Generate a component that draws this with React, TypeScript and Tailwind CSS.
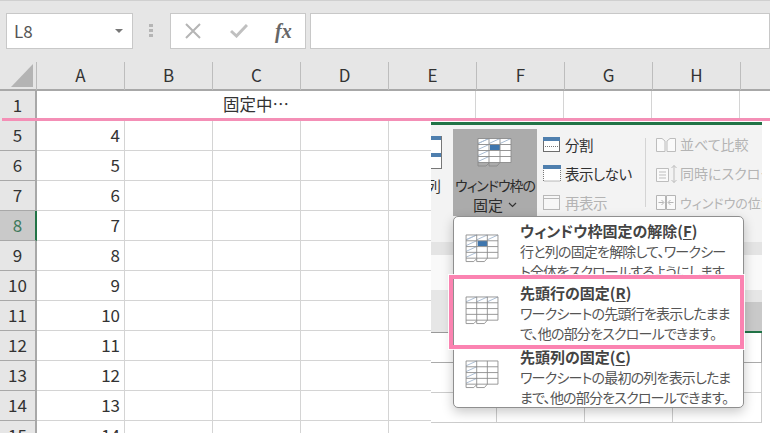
import React from "react";

const jp = '"Noto Sans CJK JP", "Noto Sans", sans-serif';
const cols = ["A", "B", "C", "D", "E", "F", "G", "H"];
const rows = [5, 6, 7, 8, 9, 10, 11, 12, 13, 14, 15];

function Freeze({ variant, w = 36, h = 30 }: { variant: "pane" | "row" | "col"; w?: number; h?: number }) {
  const hatch = "#a9bcd2";
  const line = "#8a8a8a";
  const topHatch = variant !== "col";
  const leftHatch = variant !== "row";
  return (
    <svg width={w} height={h} viewBox="0 0 36 30" fill="none">
      <rect x="1" y="1" width="33" height="24" fill="#fff" />
      {topHatch && (
        <g stroke={hatch} strokeWidth="1">
          <path d="M1 6 L12 1 M12 6 L23 1 M23 6 L34 1" />
        </g>
      )}
      {leftHatch && (
        <g stroke={hatch} strokeWidth="1">
          <path d="M1 6 L12 1 M1 12 L12 7 M1 18 L12 13 M1 24 L12 19" />
        </g>
      )}
      {variant === "pane" && <rect x="13" y="7" width="10" height="5.5" fill="#3f76ae" />}
      <path
        d="M1 1 H34 V25 M1 1 V28.5 H9 L12 25.5 V25 M12 25.5 V28.5 H20 L23 25 M1 7 H34 M1 13 H34 M1 19 H34 M1 25 H34 M12 1 V25 M23 1 V25"
        stroke={line}
        strokeWidth="0.9"
      />
    </svg>
  );
}

function SplitIcon() {
  return (
    <svg width="19" height="17" viewBox="0 0 19 17" fill="none">
      <rect x="1.5" y="1.5" width="16" height="14" fill="#fff" stroke="#6d6d6d" />
      <rect x="1" y="1" width="17" height="4" fill="#4f7fae" />
      <path d="M3 10.5 H16" stroke="#777" strokeDasharray="1 1" />
    </svg>
  );
}
function HideIcon() {
  return (
    <svg width="20" height="17" viewBox="0 0 20 17" fill="none">
      <rect x="1.5" y="2" width="17" height="14" fill="#fff" stroke="#777" strokeDasharray="1 1" />
      <rect x="1" y="0" width="18" height="4" fill="#4f7fae" />
    </svg>
  );
}
function UnhideIcon() {
  return (
    <svg width="19" height="17" viewBox="0 0 19 17" fill="none">
      <rect x="1.5" y="1.5" width="16" height="14" fill="#f7f7f7" stroke="#b8b8b8" />
      <path d="M2 4.5 H17" stroke="#b8b8b8" />
    </svg>
  );
}
function CompareIcon() {
  return (
    <svg width="22" height="16" viewBox="0 0 22 16" fill="none" stroke="#bdbdbd">
      <path d="M1.5 1.5 H7 L10 4 V14.5 H1.5 Z M12 4 L15 1.5 H20.5 V14.5 H12 Z" fill="#fafafa" />
    </svg>
  );
}
function SyncIcon() {
  return (
    <svg width="24" height="20" viewBox="0 0 24 20" fill="none" stroke="#bdbdbd">
      <path d="M1.5 4.5 H13.5 V17.5 H1.5 Z M4 8 H11 M4 11 H11 M4 14 H11" fill="#fafafa" />
      <path d="M19 1.5 V18.5 M16.5 4 L19 1.5 L21.5 4 M16.5 16 L19 18.5 L21.5 16" />
    </svg>
  );
}
function ResetIcon() {
  return (
    <svg width="22" height="17" viewBox="0 0 22 17" fill="none" stroke="#b5b5b5">
      <path d="M1.5 1.5 H10.5 V15.5 H1.5 Z M11.5 1.5 H20.5 V15.5 H11.5 Z" fill="#fafafa" />
      <path d="M3.5 8.5 H8.5 M6.5 6 L9 8.5 L6.5 11 M18.5 8.5 H13.5 M15.5 6 L13 8.5 L15.5 11" />
    </svg>
  );
}

function RibbonRow({ icon, label, disabled, size = "text-[14.5px] tracking-[-0.5px]", iconW = "w-[23px]" }: { icon: React.ReactNode; label: string; disabled?: boolean; size?: string; iconW?: string }) {
  return (
    <div className={`flex h-[29px] items-center whitespace-nowrap ${size} ${disabled ? "text-[#b4b4b4]" : "text-[#303030]"}`}>
      <div className={`flex shrink-0 items-center ${iconW}`}>{icon}</div>
      <span>{label}</span>
    </div>
  );
}

function MenuItem({ variant, title, keyName, lines, h, iconPt }: { variant: "pane" | "row" | "col"; title: string; keyName: string; lines: string[]; h: string; iconPt: string }) {
  return (
    <div className={`flex overflow-hidden pl-[11px] ${h}`}>
      <div className={`w-[55px] shrink-0 ${iconPt}`}>
        <Freeze variant={variant} w={35} h={29} />
      </div>
      <div className="whitespace-nowrap">
        <div className="text-[15px] font-bold leading-[21px] text-[#444]">
          {title}(<span className="underline underline-offset-2">{keyName}</span>)
        </div>
        {lines.map((l) => (
          <div key={l} className="text-[14px] leading-[20px] tracking-[-0.8px] text-[#555]">{l}</div>
        ))}
      </div>
    </div>
  );
}

export default function App() {
  return (
    <div className="relative h-[433px] w-[770px] overflow-hidden bg-white [font-feature-settings:'palt']" style={{ fontFamily: jp }}>
      <div className="flex h-[62px] items-center gap-[4px] border-t border-[#d0d0d0] bg-[#e6e6e6] pb-[2px] pl-[6px]">
        <div className="flex h-[36px] w-[127px] items-center justify-between border border-[#c8c8c8] bg-white pl-[7px] pr-[9px] text-[17px] text-[#555]">
          <span>L8</span>
          <span className="h-0 w-0 border-x-[4px] border-t-[4px] border-x-transparent border-t-[#777]" />
        </div>
        <div className="ml-[12px] mr-[13px] flex w-[4px] flex-col gap-[2px]">
          <span className="h-[3px] w-[4px] bg-[#b5b5b5]" />
          <span className="h-[3px] w-[4px] bg-[#b5b5b5]" />
          <span className="h-[3px] w-[4px] bg-[#b5b5b5]" />
        </div>
        <div className="flex h-[36px] w-[136px] items-center border border-[#c8c8c8] bg-white pl-[14px]">
          <svg width="16" height="16" viewBox="0 0 16 16" fill="none" stroke="#b5b5b5" strokeWidth="2"><path d="M1 1 L15 15 M15 1 L1 15" /></svg>
          <svg className="ml-[29px]" width="18" height="14" viewBox="0 0 18 14" fill="none" stroke="#c0c0c0" strokeWidth="3"><path d="M1 7 L6.5 12 L17 1" /></svg>
          <span className="ml-[27px] text-[20px] font-bold italic leading-none text-[#666]" style={{ fontFamily: '"Liberation Serif", serif' }}>fx</span>
        </div>
        <div className="h-[36px] flex-1 border border-[#c8c8c8] bg-white" />
      </div>

      <div className="grid h-[29px] grid-cols-[37px_repeat(9,88px)] border-b-2 border-[#a8a8a8] bg-[#e6e6e6]">
        <div className="flex items-end justify-end border-r border-[#bbb] pb-[3px] pr-[3px]">
          <svg width="22" height="23" viewBox="0 0 22 23"><path d="M22 0 V23 H0 Z" fill="#b4b4b4" /></svg>
        </div>
        {cols.map((c) => (
          <div key={c} className="flex items-center justify-center border-r border-[#bdbdbd] pb-[2px] text-[17px] text-[#333]">{c}</div>
        ))}
        <div />
      </div>

      <div className="grid h-[30px] grid-cols-[37px_439px_repeat(4,88px)]">
        <div className="flex items-center justify-center border-r-2 border-[#a8a8a8] bg-[#e6e6e6] pb-[2px] text-[17px] text-[#333]">1</div>
        <div className="flex items-center justify-center border-r border-[#d4d4d4] pb-[4px] text-[16.5px] text-[#333]">固定中…</div>
        <div className="border-r border-[#d4d4d4]" />
        <div className="border-r border-[#d4d4d4]" />
        <div className="border-r border-[#d4d4d4]" />
        <div />
      </div>

      {rows.map((r) => (
        <div key={r} className="grid h-[30px] grid-cols-[37px_88px_88px_88px_88px_88px]">
          <div className={`flex items-center justify-center border-b pb-[2px] text-[17px] ${r === 8 ? "border-r-2 border-b-[#a8a8a8] border-r-[#217346] bg-[#c9c9c9] text-[#3f7a5c]" : "border-r-2 border-[#a8a8a8] bg-[#e6e6e6] text-[#333]"}`}>{r}</div>
          <div className="flex items-center justify-end border-b border-r border-[#d4d4d4] pb-[2px] pr-[4px] text-[17px] text-[#333]">{r - 1}</div>
          <div className="border-b border-r border-[#d4d4d4]" />
          <div className="border-b border-r border-[#d4d4d4]" />
          <div className="border-b border-r border-[#d4d4d4]" />
          <div className="border-b border-[#d4d4d4]" />
        </div>
      ))}

      <div className="absolute left-[2px] right-0 top-[118px] h-[3px] bg-[#f48fb6]" />

      <div className="absolute left-[431px] top-[122px] h-[311px] w-[339px] overflow-hidden bg-white">
        <div className="h-[3px] w-[331px] bg-[#217346]" />
        <div className="flex h-[117px] w-[331px] overflow-hidden bg-[#f3f3f3]">
          <div className="w-[22px] shrink-0 pt-[11px]">
            <div className="h-[33px] w-[11px] border-b border-r border-[#777] bg-white">
              <div className="h-[4px] bg-[#4f7fae]" />
              <div className="mt-[13px] h-[4px] bg-[#4f7fae]" />
            </div>
            <div className="mt-[5px] h-[24px] w-[11px] overflow-hidden text-[15px] leading-[24px] text-[#333]">
              <span className="relative -left-[5px]">列</span>
            </div>
          </div>
          <div className="mt-[4px] flex h-[87px] w-[84px] shrink-0 flex-col items-center bg-[#ababab] pt-[8px]">
            <Freeze variant="pane" w={36} h={31} />
            <div className="mt-[8px] whitespace-nowrap text-center text-[14px] leading-[19px] tracking-[-1px] text-[#2c2c2c]">
              <div>ウィンドウ枠の</div>
              <div className="flex items-center justify-center gap-[5px] text-[15px] tracking-normal">
                固定
                <svg width="9" height="6" viewBox="0 0 9 6" fill="none" stroke="#333" strokeWidth="1.2"><path d="M1 1 L4.5 4.5 L8 1" /></svg>
              </div>
            </div>
          </div>
          <div className="ml-[5px] flex w-[103px] shrink-0 flex-col pt-[5px]">
            <RibbonRow icon={<SplitIcon />} label="分割" />
            <RibbonRow icon={<HideIcon />} label="表示しない" />
            <RibbonRow icon={<UnhideIcon />} label="再表示" disabled />
          </div>
          <div className="mt-[13px] h-[69px] w-px shrink-0 bg-[#d4d4d4]" />
          <div className="ml-[9px] flex flex-col pt-[5px]">
            <RibbonRow icon={<CompareIcon />} label="並べて比較" size="text-[14px]" iconW="w-[25px]" disabled />
            <RibbonRow icon={<SyncIcon />} label="同時にスクロール" size="text-[14px]" iconW="w-[25px]" disabled />
            <RibbonRow icon={<ResetIcon />} label="ウィンドウの位置を元に戻す" size="text-[13px]" iconW="w-[25px]" disabled />
          </div>
        </div>
        <div className="h-[13px] w-[331px] bg-[#e4e4e4]" />
        <div className="h-[35px] w-[331px] bg-[#f9f9f9]" />
        <div className="relative h-[43px] w-[331px] border-b border-[#999] bg-[#e6e6e6]">
          <div className="absolute bottom-[-1px] right-0 h-[31px] w-[20px] border-b-2 border-[#217346] bg-[#c9c9c9]" />
        </div>
        <div className="h-[30px] w-[331px] border-b border-r border-[#aaa]" />
        <div className="grid h-[30px] w-[331px] grid-cols-[66px_88px_88px_89px] border-b border-[#ccc]">
          <div className="border-r border-[#ccc]" />
          <div className="border-r border-[#ccc]" />
          <div className="border-r border-[#ccc]" />
          <div className="border-r border-[#ccc]" />
        </div>
        <div className="grid h-[30px] w-[331px] grid-cols-[66px_88px_88px_89px] border-b border-[#ccc]">
          <div className="border-r border-[#ccc]" />
          <div className="border-r border-[#ccc]" />
          <div className="border-r border-[#ccc]" />
          <div className="border-r border-[#ccc]" />
        </div>
      </div>

      <div className="absolute left-[453px] top-[216px] h-[192px] w-[291px] overflow-hidden rounded-[5px] border border-[#8f8f8f] bg-white shadow-[0_4px_12px_rgba(0,0,0,0.22)]">
        <MenuItem variant="pane" title="ウィンドウ枠固定の解除" keyName="F" iconPt="pt-[14px]" lines={["行と列の固定を解除して、ワークシー", "ト全体をスクロールするようにします"]} h="h-[62px] pt-[3px]" />
        <MenuItem variant="row" title="先頭行の固定" keyName="R" iconPt="pt-[14px]" lines={["ワークシートの先頭行を表示したまま", "で、他の部分をスクロールできます。"]} h="h-[65px] pt-[3px]" />
        <MenuItem variant="col" title="先頭列の固定" keyName="C" iconPt="pt-[14px]" lines={["ワークシートの最初の列を表示したま", "まで、他の部分をスクロールできます。"]} h="h-[63px] pt-[2px]" />
      </div>
      <div className="absolute left-[449px] top-[275px] h-[74px] w-[295px] border-[4px] border-[#fb83b1] shadow-[0_0_0_1px_rgba(255,255,255,0.9)]" />
    </div>
  );
}
